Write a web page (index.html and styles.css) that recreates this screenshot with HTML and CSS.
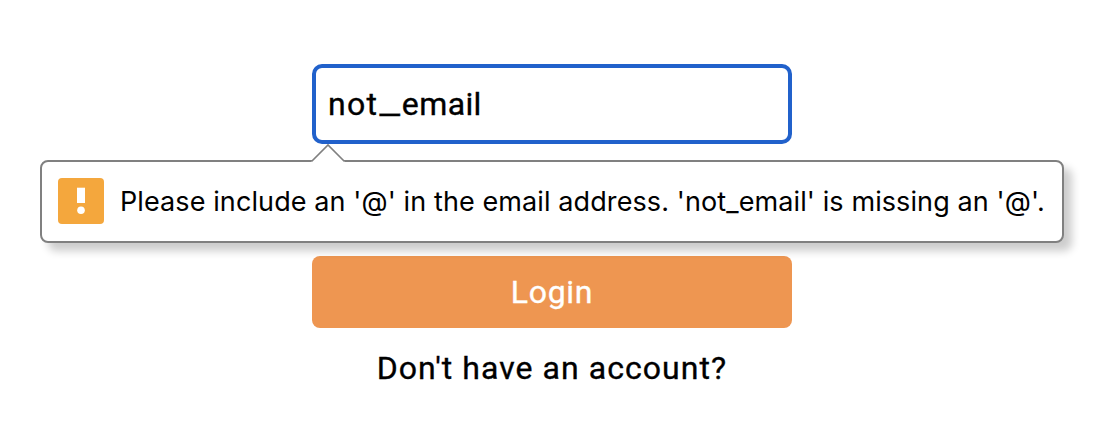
FILE: index.html
```html
<!DOCTYPE html>
<html lang="en">
<head>
<meta charset="utf-8">
<title>Login</title>
<link rel="stylesheet" href="styles.css">
</head>
<body>
<main class="form">
  <div class="field"><span class="value"><span class="value-start">not</span><span class="underscore">_</span>email</span></div>
  <button class="login" type="button"><span class="login-label">Login</span></button>
  <div class="signup"><span class="signup-label">Don't have an account?</span></div>
</main>
<div class="tooltip" role="alert">
  <svg class="arrow" width="36" height="19" viewBox="0 0 36 19"><path d="M1 17 L2 17 L18 1 L34 17 L35 17 L35 19 L1 19Z" fill="#fff"/><path d="M0 17H2L18 1L34 17H36" fill="none" stroke="#808080" stroke-width="1.7"/></svg>
  <svg class="warning" width="46" height="46" viewBox="0 0 46 46"><rect width="46" height="46" rx="4" fill="#f4a73d"/><rect x="19" y="9.7" width="8" height="15.3" fill="#fff"/><circle cx="23" cy="32.2" r="3.8" fill="#fff"/></svg>
  <span class="message">Please include an '@' in the email address. 'not_email' is missing an '@'.</span>
</div>
</body>
</html>
```
FILE: styles.css
```css
* { box-sizing: border-box; }
body { margin: 0; background: #fff; color: #000; height: 430px; overflow: hidden; }
.form {
  display: flex;
  flex-direction: column;
  width: 480px;
  margin: 64px 0 0 312px;
  font-family: Roboto, sans-serif;
  font-size: 32px;
  line-height: 38px;
  -webkit-text-stroke: 0.35px currentColor;
}
.field {
  display: flex;
  align-items: center;
  height: 80px;
  padding: 0 12px;
  border: 4px solid #2161cb;
  border-radius: 10px;
}
.value { white-space: nowrap; letter-spacing: 0.4px; }
.value-start { letter-spacing: 1.3px; }
.underscore {
  display: inline-block;
  width: 23.5px;
  letter-spacing: 0;
  transform: translate(1.5px, -1px) scaleX(1.42);
  transform-origin: left center;
}
.login {
  height: 72px;
  margin-top: 112px;
  padding: 0;
  border: 0;
  border-radius: 8px;
  background: #ee9651;
  color: #fff;
  font: inherit;
}
.login-label { letter-spacing: 0.7px; }
.signup { margin-top: 21px; text-align: center; white-space: nowrap; }
.signup-label { letter-spacing: 1.05px; }
.tooltip {
  position: absolute;
  left: 40px;
  top: 160px;
  display: flex;
  align-items: center;
  gap: 16px;
  width: 1024px;
  height: 83px;
  padding: 0 16px 1px;
  border: 2px solid #808080;
  border-radius: 8px;
  background: #fff;
  box-shadow: 8px 8px 8px rgba(0, 0, 0, 0.2);
}
.arrow { position: absolute; left: 268px; top: -18px; }
.warning { flex: none; }
.message {
  padding-top: 2px;
  font-family: Inter, sans-serif;
  font-size: 27px;
  letter-spacing: 0.1px;
  line-height: 32px;
  white-space: nowrap;
}
```
